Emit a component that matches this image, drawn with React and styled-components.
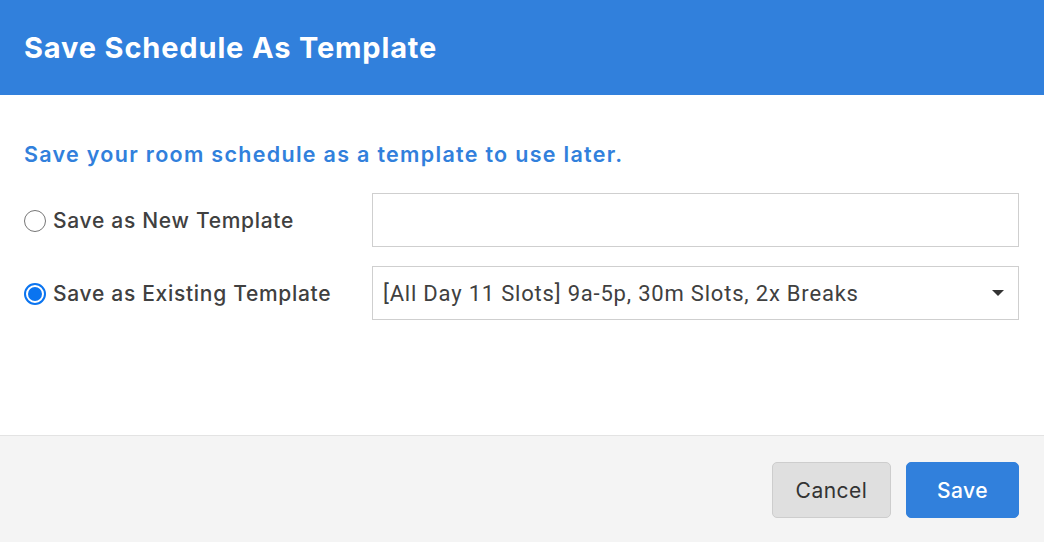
import React, { useState } from 'react'
import styled, { createGlobalStyle } from 'styled-components'

const GlobalStyle = createGlobalStyle`
  html, body {
    margin: 0;
    padding: 0;
    background: #fff;
  }
  body {
    font-family: Inter, 'Noto Sans', sans-serif;
  }
  * {
    box-sizing: border-box;
  }
`

const colors = {
  blue: '#3180dc',
  text: '#404040',
  border: '#cfcfcf',
  footer: '#f4f4f4'
}

const Modal = styled.div`
  width: 1044px;
  height: 542px;
  display: flex;
  flex-direction: column;
  background: #fff;
`

const Header = styled.div`
  height: 95px;
  background: ${colors.blue};
  display: flex;
  align-items: center;
  padding: 0 24px 0;
`

const Title = styled.h2`
  margin: 0;
  color: #fff;
  font-size: 29px;
  font-weight: 700;
  letter-spacing: 0.85px;
`

const Body = styled.div`
  flex: 1;
  padding: 46px 25px 0 24px;
`

const Intro = styled.p`
  margin: 0 0 26px;
  color: ${colors.blue};
  font-size: 21.5px;
  font-weight: 600;
  letter-spacing: 1.3px;
`

const Row = styled.div`
  display: grid;
  grid-template-columns: 348px 1fr;
  align-items: center;
  margin-bottom: 19px;
`

const RadioLabel = styled.label`
  display: flex;
  align-items: center;
  gap: 7px;
  padding-top: 1px;
  color: ${colors.text};
  font-size: 21px;
  font-weight: 500;
  letter-spacing: 0.7px;
  cursor: pointer;
`

const RadioDot = styled.span`
  width: 22px;
  height: 22px;
  border-radius: 50%;
  border: ${p => (p.checked ? `2px solid #0a74f0` : '1.5px solid #767676')};
  display: flex;
  align-items: center;
  justify-content: center;
  flex-shrink: 0;
  &::after {
    content: '';
    display: ${p => (p.checked ? 'block' : 'none')};
    width: 14px;
    height: 14px;
    border-radius: 50%;
    background: #0a74f0;
  }
`

const TextInput = styled.input`
  height: 54px;
  width: 100%;
  border: 1px solid ${colors.border};
  padding: 0 10px;
  font-size: 20px;
  outline: none;
`

const SelectBox = styled.div`
  height: 54px;
  border: 1px solid ${colors.border};
  display: flex;
  align-items: center;
  justify-content: space-between;
  padding: 0 14px 0 10px;
  font-family: Roboto, sans-serif;
  font-size: 22px;
  letter-spacing: 0.8px;
  color: ${colors.text};
`

const Caret = styled.span`
  width: 0;
  height: 0;
  border-left: 6px solid transparent;
  border-right: 6px solid transparent;
  border-top: 6px solid #333;
`

const Footer = styled.div`
  height: 107px;
  background: ${colors.footer};
  border-top: 1px solid #e3e3e3;
  display: flex;
  justify-content: flex-end;
  align-items: flex-start;
  gap: 15px;
  padding: 26px 25px 0 0;
`

const Button = styled.button`
  height: 56px;
  width: ${p => p.width}px;
  border-radius: 5px;
  font-family: Inter, sans-serif;
  font-size: 21px;
  letter-spacing: 0.5px;
  cursor: pointer;
  border: 1px solid ${p => (p.primary ? colors.blue : '#cdcdcd')};
  background: ${p => (p.primary ? colors.blue : '#dfdfdf')};
  color: ${p => (p.primary ? '#fff' : '#333')};
  font-weight: ${p => (p.primary ? 500 : 400)};
`

export default function App() {
  const [mode, setMode] = useState('existing')
  return (
    <>
      <GlobalStyle />
      <Modal>
        <Header>
          <Title>Save Schedule As Template</Title>
        </Header>
        <Body>
          <Intro>Save your room schedule as a template to use later.</Intro>
          <Row>
            <RadioLabel onClick={() => setMode('new')}>
              <RadioDot checked={mode === 'new'} />
              Save as New Template
            </RadioLabel>
            <TextInput />
          </Row>
          <Row>
            <RadioLabel onClick={() => setMode('existing')}>
              <RadioDot checked={mode === 'existing'} />
              Save as Existing Template
            </RadioLabel>
            <SelectBox>
              [All Day 11 Slots] 9a-5p, 30m Slots, 2x Breaks
              <Caret />
            </SelectBox>
          </Row>
        </Body>
        <Footer>
          <Button width={119}>Cancel</Button>
          <Button primary width={113}>Save</Button>
        </Footer>
      </Modal>
    </>
  )
}
